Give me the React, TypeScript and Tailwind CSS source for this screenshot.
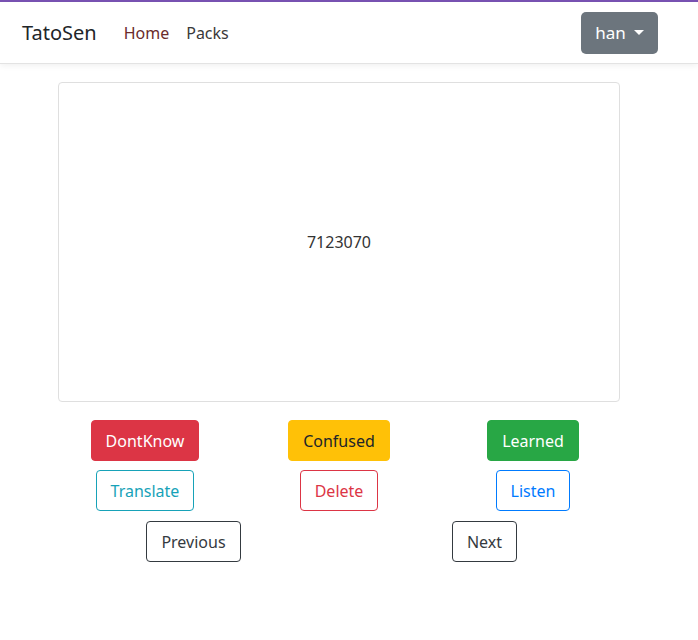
import React from "react";

const font = { fontFamily: '"Segoe UI", "Noto Sans", Lato, sans-serif' };

function Btn({ label, cls }: { label: string; cls: string }) {
  return (
    <button
      className={`h-[41px] px-[14px] rounded-[4px] border text-[16px] leading-none ${cls}`}
    >
      {label}
    </button>
  );
}

export default function App() {
  return (
    <div className="min-h-[640px] bg-white text-[#212529]" style={font}>
      <div className="h-[2px] bg-[#7952b3]" />
      <nav className="h-[62px] flex items-center pl-[22px] pr-[40px] border-b border-[#e3e3e3] shadow-[0_2px_6px_rgba(0,0,0,0.06)]">
        <span className="text-[20px] text-[#212529] mr-[27px]">TatoSen</span>
        <a className="text-[16px] text-[#6b2b2b] mr-[17px]">Home</a>
        <a className="text-[16px] text-[#3a3a3a]">Packs</a>
        <div className="flex-1" />
        <button className="h-[42px] w-[77px] rounded-[5px] bg-[#6c757d] text-white text-[17px] flex items-center justify-center gap-[8px]">
          han
          <span className="w-0 h-0 border-l-[5px] border-r-[5px] border-t-[5px] border-l-transparent border-r-transparent border-t-white" />
        </button>
      </nav>
      <div className="w-[582px] ml-[48px] pt-[18px]">
        <div className="mx-[10px] h-[320px] border border-[#dfdfdf] rounded-[4px] flex items-center justify-center text-[16px] text-[#333]">
          7123070
        </div>
        <div className="grid grid-cols-3 mt-[18px]">
          <div className="flex justify-center">
            <Btn label="DontKnow" cls="bg-[#dc3545] border-[#dc3545] text-white" />
          </div>
          <div className="flex justify-center">
            <Btn label="Confused" cls="bg-[#ffc107] border-[#ffc107] text-[#212529]" />
          </div>
          <div className="flex justify-center">
            <Btn label="Learned" cls="bg-[#28a745] border-[#28a745] text-white" />
          </div>
        </div>
        <div className="grid grid-cols-3 mt-[9px]">
          <div className="flex justify-center">
            <Btn label="Translate" cls="border-[#17a2b8] text-[#17a2b8] bg-white" />
          </div>
          <div className="flex justify-center">
            <Btn label="Delete" cls="border-[#dc3545] text-[#dc3545] bg-white" />
          </div>
          <div className="flex justify-center">
            <Btn label="Listen" cls="border-[#007bff] text-[#007bff] bg-white" />
          </div>
        </div>
        <div className="grid grid-cols-2 mt-[10px]">
          <div className="flex justify-center">
            <Btn label="Previous" cls="border-[#343a40] text-[#343a40] bg-white" />
          </div>
          <div className="flex justify-center">
            <Btn label="Next" cls="border-[#343a40] text-[#343a40] bg-white" />
          </div>
        </div>
      </div>
    </div>
  );
}
